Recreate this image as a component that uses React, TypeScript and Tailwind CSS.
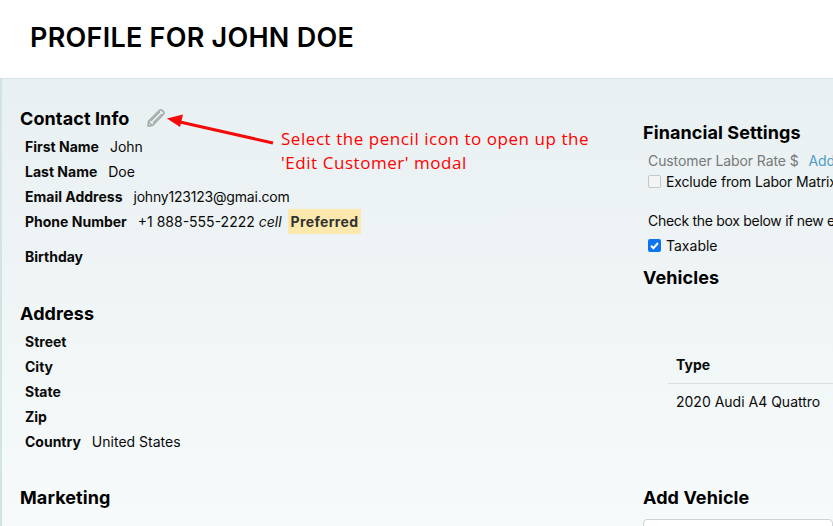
function Row({ label, value, className = "" }: { label: string; value?: React.ReactNode; className?: string }) {
  return (
    <div className={`flex h-[25px] items-center whitespace-nowrap pl-[5px] ${className}`}>
      <span className="font-bold">{label}</span>
      {value !== undefined && <span className="ml-[11px] flex items-center">{value}</span>}
    </div>
  );
}

function Pencil() {
  return (
    <svg width="20" height="20" viewBox="0 0 20 20" fill="none" className="ml-[17px] shrink-0">
      <path d="M2.5 13.5 L13.5 2.5 Q14.6 1.4 15.8 2.2 L17.6 4 Q18.5 5.2 17.4 6.4 L6.5 17.4 L2 18 Z" stroke="#a9aeaf" strokeWidth="1.8" strokeLinejoin="round" />
      <path d="M4.8 13 L13.8 4 M7 15 L16 6 M3 14 L6 17.2" stroke="#a9aeaf" strokeWidth="1.4" />
    </svg>
  );
}

const heading = "flex h-[24px] items-center text-[18px] font-bold tracking-[0.1px] text-black";

export default function App() {
  return (
    <div className="relative h-[526px] w-[833px] overflow-hidden bg-white text-[14px] text-[#0a0a0a] [font-family:Inter,'Liberation_Sans',sans-serif]">
      <header className="flex h-[76px] items-center pl-[30px]">
        <h1 className="text-[27px] font-semibold tracking-[0.25px] text-black">PROFILE FOR JOHN DOE</h1>
      </header>
      <main className="mt-[2px] grid h-[448px] grid-cols-[623px_1fr] border-t border-l-2 border-[#d3e3e5] bg-gradient-to-b from-[#e9f0f1] to-[#f6fafb] pl-[18px]">
        <section className="pt-[27px]">
          <div className={heading}>
            <h2>Contact Info</h2>
            <Pencil />
          </div>
          <div className="pt-[4px]">
            <Row label="First Name" value="John" />
            <Row label="Last Name" value="Doe" />
            <Row label="Email Address" value={<span className="tracking-[-0.2px]">johny123123@gmai.com</span>} />
            <Row
              label="Phone Number"
              value={
                <>
                  +1 888-555-2222&nbsp;<em>cell</em>
                  <span className="ml-[6px] bg-[#fde9ad] px-[3px] py-[2px] font-bold tracking-[0.35px] text-[#333]">Preferred</span>
                </>
              }
            />
            <Row label="Birthday" className="mt-[10px]" />
          </div>
          <h2 className={`mt-[32px] ${heading}`}>Address</h2>
          <div className="pt-[4px]">
            <Row label="Street" />
            <Row label="City" />
            <Row label="State" />
            <Row label="Zip" />
            <Row label="Country" value="United States" />
          </div>
          <h2 className={`mt-[31px] ${heading}`}>Marketing</h2>
        </section>
        <section className="overflow-hidden whitespace-nowrap pt-[41px]">
          <h2 className={heading}>Financial Settings</h2>
          <div className="pl-[5px]">
            <div className="mt-[6px] flex h-[20px] items-center tracking-[-0.1px] text-[#77797a]">
              Customer Labor Rate $<span className="ml-[10px] text-[#4f9cc6]">Add</span>
            </div>
            <div className="flex h-[22px] items-center tracking-[-0.15px]">
              <span className="mr-[5px] h-[13px] w-[13px] shrink-0 rounded-[2px] border border-[#c4c6c7] bg-[#f3f5f5]" />
              Exclude from Labor Matrix
            </div>
            <div className="mt-[18px] flex h-[20px] items-center tracking-[-0.3px]">Check the box below if new estimates</div>
            <div className="mt-[5px] flex h-[20px] items-center">
              <span className="mr-[5px] flex h-[13px] w-[13px] shrink-0 items-center justify-center rounded-[2px] bg-[#0b75f0]">
                <svg width="11" height="11" viewBox="0 0 11 11" fill="none">
                  <path d="M2 5.8 L4.4 8.2 L9 3" stroke="white" strokeWidth="2" />
                </svg>
              </span>
              Taxable
            </div>
          </div>
          <h2 className={`mt-[10px] ${heading}`}>Vehicles</h2>
          <div className="mt-[57px] ml-[25px]">
            <div className="flex h-[38px] items-center border-b border-[#dcdfe0] pl-[8px] font-bold">Type</div>
            <div className="flex h-[35px] items-center pl-[8px]">2020 Audi A4 Quattro</div>
          </div>
          <h2 className={`mt-[66px] ${heading}`}>Add Vehicle</h2>
          <div className="mt-[10px] h-[40px] rounded-[4px] border border-[#cfd3d4] bg-white" />
        </section>
      </main>
      <div className="absolute top-[127px] left-[281px] text-[17px] leading-[24px] font-normal tracking-[0.55px] whitespace-nowrap text-[#ff0000] [font-family:'Open_Sans',sans-serif]">
        <div>Select the pencil icon to open up the</div>
        <div>'Edit Customer' modal</div>
      </div>
      <svg className="absolute top-[110px] left-[160px]" width="120" height="40" viewBox="0 0 120 40" fill="none">
        <path d="M113 33 L20 12" stroke="#f50a0a" strokeWidth="3" />
        <path d="M7 8.5 L23 4.5 L20 17 Z" fill="#f50a0a" />
      </svg>
    </div>
  );
}
